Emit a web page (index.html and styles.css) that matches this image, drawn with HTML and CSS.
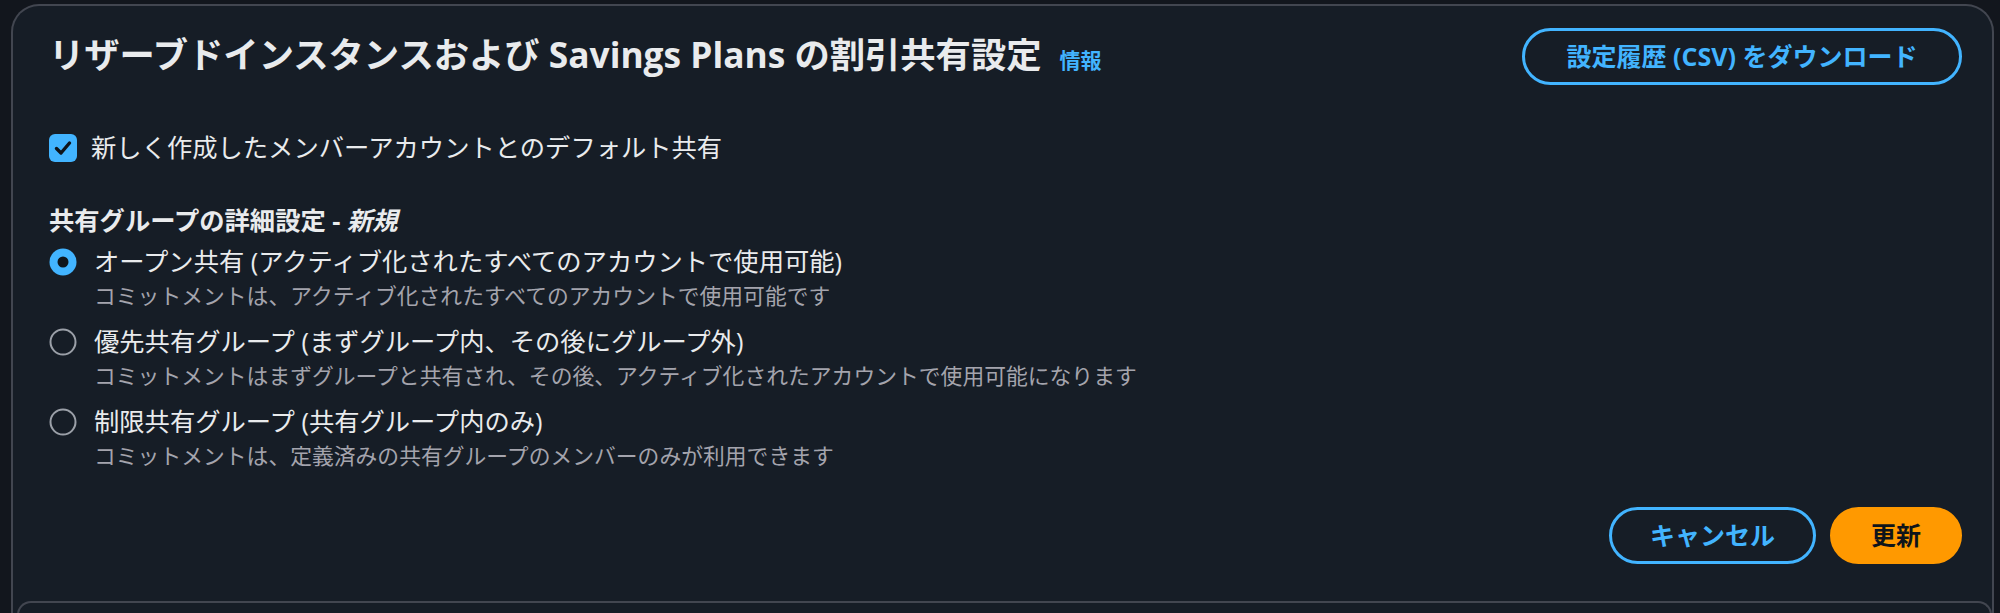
FILE: index.html
```html
<!DOCTYPE html>
<html lang="ja">
<head>
<meta charset="utf-8">
<title>割引共有設定</title>
<link rel="stylesheet" href="styles.css">
</head>
<body>
<div class="page">
  <section class="card">
    <header class="card-header">
      <h2 class="title">リザーブドインスタンスおよび Savings Plans の割引共有設定<a class="info" href="#">情報</a></h2>
      <button class="btn btn-normal btn-wide" type="button">設定履歴 (CSV) をダウンロード</button>
    </header>
    <div class="form">
      <label class="checkbox-row">
        <span class="checkbox">
          <svg viewBox="0 0 28 28" width="28" height="28"><polyline points="7.5,14.5 12,19 20.5,9" fill="none" stroke="#0f141a" stroke-width="3.4" stroke-linecap="round" stroke-linejoin="round"/></svg>
        </span>
        <span class="checkbox-label">新しく作成したメンバーアカウントとのデフォルト共有</span>
      </label>
      <div class="field">
        <div class="field-label">共有グループの詳細設定 - <em>新規</em></div>
        <div class="radio-group">
          <div class="radio-item">
            <span class="radio">
              <svg viewBox="0 0 28 28" width="28" height="28"><circle cx="14" cy="14" r="13.5" fill="#42b4ff"/><circle cx="14" cy="14" r="5.5" fill="#0f141a"/></svg>
            </span>
            <div class="radio-text">
              <div class="radio-label">オープン共有 (アクティブ化されたすべてのアカウントで使用可能)</div>
              <div class="radio-desc">コミットメントは、アクティブ化されたすべてのアカウントで使用可能です</div>
            </div>
          </div>
          <div class="radio-item">
            <span class="radio">
              <svg viewBox="0 0 28 28" width="28" height="28"><circle cx="14" cy="14" r="12.5" fill="none" stroke="#9ba0a8" stroke-width="2"/></svg>
            </span>
            <div class="radio-text">
              <div class="radio-label">優先共有グループ (まずグループ内、その後にグループ外)</div>
              <div class="radio-desc">コミットメントはまずグループと共有され、その後、アクティブ化されたアカウントで使用可能になります</div>
            </div>
          </div>
          <div class="radio-item">
            <span class="radio">
              <svg viewBox="0 0 28 28" width="28" height="28"><circle cx="14" cy="14" r="12.5" fill="none" stroke="#9ba0a8" stroke-width="2"/></svg>
            </span>
            <div class="radio-text">
              <div class="radio-label">制限共有グループ (共有グループ内のみ)</div>
              <div class="radio-desc">コミットメントは、定義済みの共有グループのメンバーのみが利用できます</div>
            </div>
          </div>
        </div>
      </div>
      <div class="actions">
        <button class="btn btn-normal" type="button">キャンセル</button>
        <button class="btn btn-primary" type="button">更新</button>
      </div>
    </div>
    <div class="next-section"></div>
  </section>
</div>
</body>
</html>
```
FILE: styles.css
```css
html, body {
  margin: 0;
  overflow: hidden;
}

body {
  background: #12161d;
  color: #e9ebed;
  font-family: "Open Sans", "Noto Sans CJK JP", sans-serif;
}

.page {
  padding: 4px 6px 0 11px;
}

.card {
  background: #161d26;
  border: 2px solid #424650;
  border-bottom: none;
  border-radius: 28px 28px 0 0;
  padding: 22px 30px 0 36px;
}

.card-header {
  display: flex;
  align-items: center;
  justify-content: space-between;
  height: 57px;
}

.title {
  margin: 0;
  font-size: 35.3px;
  line-height: 42px;
  font-weight: 700;
  color: #e9ebed;
}

.info {
  margin-left: 18px;
  font-size: 21px;
  font-weight: 700;
  color: #42b4ff;
  text-decoration: none;
}

.btn {
  box-sizing: border-box;
  height: 57px;
  padding: 0 38px;
  border-radius: 29px;
  border: 3px solid #42b4ff;
  background: transparent;
  color: #42b4ff;
  font-family: "Open Sans", "Noto Sans CJK JP", sans-serif;
  font-size: 25px;
  font-weight: 700;
  line-height: 1;
  white-space: nowrap;
}

.btn-wide {
  min-width: 440px;
}

.btn-primary {
  background: #ff9900;
  border-color: #ff9900;
  color: #0f141a;
}

.form {
  margin-top: 45px;
}

.checkbox-row {
  display: flex;
  align-items: center;
  gap: 14px;
  height: 35px;
  font-size: 25.3px;
  line-height: 35px;
  color: #e9ebed;
}

.checkbox {
  display: flex;
  flex: none;
  width: 28px;
  height: 28px;
  border-radius: 6px;
  background: #42b4ff;
}

.field {
  margin-top: 37.5px;
}

.field-label {
  font-size: 25.3px;
  line-height: 35px;
  font-weight: 700;
  color: #e9ebed;
}

.radio-group {
  display: flex;
  flex-direction: column;
  gap: 14px;
  margin-top: 6.5px;
}

.radio-item {
  display: flex;
  align-items: flex-start;
  gap: 17px;
}

.radio {
  display: flex;
  flex: none;
  width: 28px;
  height: 28px;
  margin-top: 4px;
}

.radio-label {
  font-size: 25.3px;
  line-height: 35px;
  color: #e9ebed;
}

.radio-desc {
  margin-top: 3px;
  font-size: 21.8px;
  line-height: 28px;
  color: #a4a4ad;
}

.actions {
  display: flex;
  justify-content: flex-end;
  gap: 14px;
  margin-top: 36.5px;
}

.next-section {
  height: 12px;
  margin: 37.5px -30px 0 -32px;
  border: 2px solid #424650;
  border-bottom: none;
  border-radius: 28px 28px 0 0;
}
```
